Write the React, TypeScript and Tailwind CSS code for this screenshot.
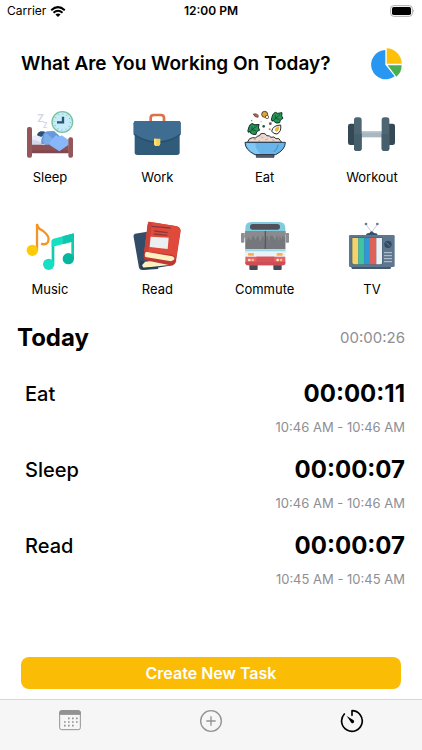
import type { ReactNode } from "react";

function SleepIcon() {
  return (
    <svg viewBox="21 18 168 168" className="h-14 w-14" aria-hidden="true">
      <text x="67" y="66" fontSize="31" fill="#cfd3e6" fontFamily="Inter, sans-serif" fontWeight="600">Z</text>
      <text x="83" y="84" fontSize="22" fill="#cfd3e6" fontFamily="Inter, sans-serif" fontWeight="600">Z</text>
      <path d="M51 110q10-7 24-3l12 4v24H51z" fill="#e9edf7" />
      <path d="M51 119q14 0 30 9v8H51z" fill="#d3d9ea" />
      <path d="M66 106q1-9 11-12 10-2 15 3l-3 13q-7-4-10 1z" fill="#2d506f" />
      <path d="M79 132q-2-12 3-23 4-13 15-15l20-1 44 39z" fill="#6799df" />
      <path d="M90 99q7 0 12 8l22 17 10 11H89q-8-15 1-36z" fill="#7badea" />
      <path d="M51 134h110v25H51z" fill="#8c5055" />
      <path d="M51 151h110v9H51z" fill="#804951" />
      <path d="M104 126l19-20q9 7 17 0l21 14v14l-28 20-28-18z" fill="#89b8fa" />
      <rect x="36" y="81" width="15" height="92" rx="6" fill="#945659" />
      <rect x="160" y="112" width="14" height="61" rx="6" fill="#945659" />
      <circle cx="142" cy="66" r="33" fill="#78c39b" />
      <circle cx="142" cy="66" r="29" fill="#c6ebfa" />
      <circle cx="142" cy="66" r="24" fill="none" stroke="#75a7bb" strokeWidth="4" strokeDasharray="2 10.57" />
      <path d="M144 50v17h-18" fill="none" stroke="#29566d" strokeWidth="7" />
    </svg>
  );
}

function WorkIcon() {
  return (
    <svg viewBox="22 18 168 168" className="h-14 w-14" aria-hidden="true">
      <path d="M87 65V54q0-9 9-9h22q9 0 9 9v11" fill="none" stroke="#dc7047" strokeWidth="8" />
      <path d="M39 95h135v62q0 8-8 8H47q-8 0-8-8z" fill="#315b7b" />
      <path d="M36 70q0-7 7-7h127q7 0 7 7v34q-32 25-70 25t-71-25z" fill="#28506e" />
      <path d="M36 70q0-7 7-7h127q7 0 7 7v30q-32 24-70 24t-71-24z" fill="#3f6d91" />
      <path d="M97 116h19v14q0 5-4 8h-11q-4-3-4-8z" fill="#f2d357" />
      <path d="M97 116h7v22h-3q-4-3-4-8z" fill="#ffe06e" />
    </svg>
  );
}

function Leaf() {
  return (
    <>
      <path d="M-16 9Q-14-11-4-15l7 3 13-2-1 10 4 7-8 5-2 8q-12 5-19-6z" fill="#239653" stroke="#17352d" strokeWidth="3" strokeLinejoin="round" />
      <path d="M-15 14L10-9M-4 3v-9M-4 3L8 6" fill="none" stroke="#17352d" strokeWidth="2" />
    </>
  );
}

function EatIcon() {
  return (
    <svg viewBox="26 18 168 168" className="h-14 w-14" aria-hidden="true">
      <g transform="translate(145 52)"><Leaf /></g>
      <g transform="translate(75 86) rotate(4)"><Leaf /></g>
      <path d="M75 42q12-3 15 5l-1 5q-11 0-14-10z" fill="#d66052" stroke="#363039" strokeWidth="2" />
      <circle cx="109" cy="43" r="9" fill="#dca439" stroke="#383334" strokeWidth="2.5" />
      <circle cx="116" cy="51" r="5" fill="#fff0bd" stroke="#383334" strokeWidth="2" />
      <path d="M130 94q3-18 27-19 3 20-11 27-10 0-16-8z" fill="#fffdf2" stroke="#222f39" strokeWidth="3" />
      <path d="M139 91q2-11 14-12 0 13-8 17z" fill="#efb432" />
      <circle cx="106" cy="79" r="4" fill="#295b4a" />
      <circle cx="126" cy="71" r="4" fill="#684b4d" />
      <circle cx="124" cy="88" r="3" fill="#d87766" />
      <circle cx="70" cy="62" r="2" fill="#48826e" />
      <circle cx="98" cy="65" r="2" fill="#d6b47a" />
      <path d="M57 127l7-11 9-3 9 1q3-7 12-7 0-7 10-7 8 0 11 7 9-1 13 5 10-4 15 4 11-3 13 6l4 5z" fill="#eed9ce" stroke="#322f35" strokeWidth="3" strokeLinejoin="round" />
      <path d="M76 117l7 2m15-8 7 3m5 6 9-3m12 3 8 2m-50 2 6-2" stroke="#ad9791" strokeWidth="2" />
      <path d="M50 127h121q0 22-29 37H80q-30-14-30-37z" fill="#69b5e9" stroke="#213748" strokeWidth="3" />
      <path d="M54 130h27q0 19 16 32H82q-27-13-28-32z" fill="#83c8f4" />
      <path d="M150 134q-3 14-14 22" fill="none" stroke="#4688b7" strokeWidth="3" />
      <path d="M84 164h53v8H84z" fill="#555f70" stroke="#252e39" strokeWidth="2" />
    </svg>
  );
}

function WorkoutIcon() {
  return (
    <svg viewBox="36 18 168 168" className="h-14 w-14" aria-hidden="true">
      <rect x="84" y="94" width="70" height="18" fill="#a8b8c1" />
      <path d="M84 94h70v4H84z" fill="#bac6cc" />
      <rect x="48" y="71" width="28" height="64" rx="7" fill="#354955" />
      <rect x="161" y="71" width="28" height="64" rx="7" fill="#354955" />
      <rect x="66" y="52" width="23" height="101" rx="8" fill="#4e6673" />
      <rect x="149" y="52" width="23" height="101" rx="8" fill="#4e6673" />
      <path d="M66 102h23v43q0 8-8 8h-7q-8 0-8-8zm83 0h23v43q0 8-8 8h-7q-8 0-8-8z" fill="#465f6c" />
    </svg>
  );
}

function MusicIcon() {
  return (
    <svg viewBox="21 18 168 168" className="h-14 w-14" aria-hidden="true">
      <path d="M66 115V36q2 14 17 20 24 18 16 34-5 9-18 6" fill="none" stroke="#f49426" strokeWidth="7" strokeLinecap="round" />
      <circle cx="52" cy="115" r="17" fill="#fecb08" />
      <path d="M114 155V88l59-18v68" fill="none" stroke="#17c9ae" strokeWidth="8" />
      <path d="M110 87q0-5 5-7l57-15q5-1 5 4v19l-67 17z" fill="#17dfc3" />
      <path d="M143 73l29-8q5-1 5 4v19l-34 9z" fill="#10c6ad" />
      <circle cx="101" cy="157" r="17" fill="#17dfc3" />
      <circle cx="160" cy="140" r="17" fill="#07b69f" />
    </svg>
  );
}

function ReadIcon() {
  return (
    <svg viewBox="22 18 168 168" className="h-14 w-14" aria-hidden="true">
      <path d="M40 65l37-6 33 112-49 3q-7 0-9-7L36 76q-2-8 4-11z" fill="#334c67" />
      <path d="M60 151l94-12-7 23-82 5q-8-8-5-16z" fill="#fff0c0" />
      <path d="M58 147q-6 7-1 20l8 7 87-14 13-13-8 2-7 9-83 9q-7-1-5-9l8-8z" fill="#263e55" />
      <path d="M80 29l82 13q15 3 15 15l-14 90q-3 15-18 13l-73-15q-8-3-6-14z" fill="#bd3835" />
      <path d="M73 119l79 14q9 4 5 10l-9 5-77-13q-4-8 2-16z" fill="#fff0c0" />
      <path d="M84 29l80 14q13 3 12 13l-13 84q-3-9-13-12l-82-10 10-81q1-9 6-8z" fill="#df4a3b" />
      <path d="M82 30l9 2-12 87-11-1 10-80z" fill="#cc4138" />
      <path d="M87 74l54 3-3 34-54-6z" fill="#eceff1" />
      <path d="M90 43l57 5M98 57l40 5M97 66l40 4" stroke="#8a3a3c" strokeWidth="4" />
    </svg>
  );
}

function CommuteIcon() {
  return (
    <svg viewBox="26 18 168 168" className="h-14 w-14" aria-hidden="true">
      <path d="M52 65H42v26m118-26h20v26" fill="none" stroke="#a5b0b7" strokeWidth="4" />
      <rect x="38" y="63" width="10" height="29" rx="3" fill="#8b8e93" />
      <rect x="172" y="63" width="10" height="29" rx="3" fill="#8b8e93" />
      <rect x="63" y="155" width="25" height="19" rx="3" fill="#494b52" />
      <rect x="135" y="155" width="25" height="19" rx="3" fill="#494b52" />
      <path d="M51 48q0-18 18-18h83q19 0 19 18v74H51z" fill="#80ccdf" />
      <rect x="65" y="36" width="90" height="17" rx="8" fill="#50515a" />
      <path d="M51 57h120v54H51z" fill="#75777c" />
      <path d="M51 57h120v12l-5 12v-9h-5v12l-8-14v19l-7-20-6 16-7-14h-9v19l-7-20-8 13-6-14-7 21-7-20-8 14-7-15-7 18-7-12-6 13-7-14z" fill="#8a8b8f" />
      <path d="M111 57v55" stroke="#545961" strokeWidth="4" />
      <path d="M51 112h120v24H51z" fill="#e8f2f7" />
      <path d="M51 112h120v6H51z" fill="#9ad7e6" />
      <path d="M51 134h120v17q0 9-9 9H60q-9 0-9-9z" fill="#ea6264" />
      <path d="M51 149h120v3q0 8-9 8H60q-9 0-9-8z" fill="#ce4d56" />
      <path d="M84 134h54v16H84z" fill="#d75259" />
      <rect x="59" y="123" width="18" height="8" rx="3" fill="#f8b14b" />
      <rect x="145" y="123" width="18" height="8" rx="3" fill="#f8b14b" />
      <g fill="#fff4c5"><circle cx="63" cy="144" r="4" /><circle cx="148" cy="144" r="4" /></g>
      <g fill="#ffc078"><circle cx="73" cy="144" r="4" /><circle cx="158" cy="144" r="4" /></g>
    </svg>
  );
}

function TvIcon() {
  return (
    <svg viewBox="36 18 168 168" className="h-14 w-14" aria-hidden="true">
      <path d="M102 37l17 24 17-24" fill="none" stroke="#b7adb9" strokeWidth="2" />
      <circle cx="102" cy="36" r="4" fill="#607b99" /><circle cx="136" cy="36" r="4" fill="#607b99" />
      <path d="M102 70q0-7 10-7 7-10 14 0 11 0 11 7z" fill="#36536c" />
      <path d="M56 162h123l-4 9H60z" fill="#405870" />
      <rect x="51" y="69" width="137" height="96" rx="4" fill="#5e778f" />
      <rect x="59" y="76" width="93" height="82" rx="4" fill="#49637a" />
      <path d="M61 78h18v79H65q-4-2-4-6z" fill="#f5d36a" />
      <path d="M79 78h18v79H79z" fill="#41c2a1" />
      <path d="M97 78h17v79H97z" fill="#2d98d5" />
      <path d="M114 78h19v79h-19z" fill="#df6258" />
      <path d="M133 78h17v74q0 5-5 5h-12z" fill="#ecf0f3" />
      <circle cx="168" cy="97" r="11" fill="#304b63" />
      <path d="M162 91l12 12" stroke="#6f879b" strokeWidth="3" />
      <path d="M156 122h24m-24 9h24m-24 9h24m-24 9h24" stroke="#bdc9d2" strokeWidth="3" />
    </svg>
  );
}

function StatusBar() {
  return (
    <div className="grid h-[22px] grid-cols-3 items-center px-[7px] text-xs">
      <div className="flex items-center gap-1">
        <span>Carrier</span>
        <svg viewBox="0 0 48 34" className="h-[11px] w-4" aria-label="Wi-Fi">
          <path d="M3 13q21-19 42 0M10 21q14-12 28 0" fill="none" stroke="#000" strokeWidth="6" />
          <path d="M16 26q8-6 16 0l-8 8z" />
        </svg>
      </div>
      <span className="text-center font-semibold">12:00 PM</span>
      <svg viewBox="0 0 75 36" className="h-3 w-[25px] justify-self-end" aria-label="Battery full">
        <rect x="2" y="2" width="65" height="32" rx="9" fill="none" stroke="#aaa" strokeWidth="3" />
        <rect x="6" y="6" width="57" height="24" rx="5" />
        <path d="M70 13q5 5 0 10z" fill="#aaa" />
      </svg>
    </div>
  );
}

const activities: { name: string; icon: ReactNode }[] = [
  { name: "Sleep", icon: <SleepIcon /> },
  { name: "Work", icon: <WorkIcon /> },
  { name: "Eat", icon: <EatIcon /> },
  { name: "Workout", icon: <WorkoutIcon /> },
  { name: "Music", icon: <MusicIcon /> },
  { name: "Read", icon: <ReadIcon /> },
  { name: "Commute", icon: <CommuteIcon /> },
  { name: "TV", icon: <TvIcon /> },
];

const entries = [
  { name: "Eat", duration: "00:00:11", range: "10:46 AM - 10:46 AM" },
  { name: "Sleep", duration: "00:00:07", range: "10:46 AM - 10:46 AM" },
  { name: "Read", duration: "00:00:07", range: "10:45 AM - 10:45 AM" },
];

export default function App() {
  return (
    <div className="flex min-h-screen flex-col bg-white font-['Inter',sans-serif] text-black">
      <StatusBar />
      <main className="flex flex-1 flex-col">
        <header className="flex h-[84px] items-center justify-between pr-5 pl-[21px]">
          <h1 className="text-[19px] font-semibold whitespace-nowrap">What Are You Working On Today?</h1>
          <button type="button" aria-label="Statistics">
            <svg viewBox="0 0 96 96" className="h-8 w-8">
              <path d="M46 6a44 44 0 1 0 28 79L46 50z" fill="#2797f1" />
              <path d="M50 1a46 46 0 0 1 45 46H50z" fill="#fec008" />
              <path d="M53 52h42q0 22-16 34z" fill="#4bae50" />
            </svg>
          </button>
        </header>

        <div className="grid grid-cols-[repeat(4,56px)] justify-between gap-y-[30px] px-[22px]">
          {activities.map((a) => (
            <button key={a.name} type="button" className="flex flex-col items-center gap-1">
              {a.icon}
              <span className="text-[13px] leading-[22px] whitespace-nowrap">{a.name}</span>
            </button>
          ))}
        </div>

        <section className="mt-[10px] px-[17px]">
          <div className="flex h-14 items-center justify-between">
            <h2 className="text-2xl font-bold">Today</h2>
            <span className="text-[15px] text-[#8e8e93]">00:00:26</span>
          </div>
          <ul>
            {entries.map((e, i) => (
              <li key={i} className="flex h-[76px] items-start justify-between pt-3 pl-2">
                <span className="text-xl leading-8 font-medium">{e.name}</span>
                <div className="flex flex-col items-end gap-1">
                  <span className="text-2xl leading-8 font-bold">{e.duration}</span>
                  <span className="text-[13px] leading-[26px] text-[#8e8e93]">{e.range}</span>
                </div>
              </li>
            ))}
          </ul>
        </section>

        <div className="mt-auto px-[21px] pb-[10px]">
          <button type="button" className="h-8 w-full rounded-lg bg-[#fbbc05] text-base font-semibold text-white">
            Create New Task
          </button>
        </div>
      </main>

      <nav className="grid h-[51px] grid-cols-3 justify-items-center border-t border-[#d6d6d6] bg-[#f6f6f6] pt-[9px]">
        <button type="button" aria-label="Calendar" className="h-6">
          <svg viewBox="0 0 72 72" className="h-6 w-6" fill="none" stroke="#929292" strokeWidth="3">
            <rect x="5" y="5" width="62" height="57" rx="6" />
            <path d="M5 16v-5q0-6 6-6h50q6 0 6 6v5z" fill="#929292" />
            <path d="M30 28h30M18 39h42M18 50h31" strokeWidth="5" strokeDasharray="5 7" />
          </svg>
        </button>
        <button type="button" aria-label="Add" className="h-6">
          <svg viewBox="0 0 72 72" className="h-6 w-6" fill="none" stroke="#929292" strokeWidth="4">
            <circle cx="36" cy="36" r="31" />
            <path d="M36 22v28M22 36h28" />
          </svg>
        </button>
        <button type="button" aria-label="Timer" className="h-6">
          <svg viewBox="0 0 72 72" className="h-6 w-6" fill="none" stroke="#000" strokeWidth="5">
            <path d="M13 15a31 31 0 1 0 23-10v14" strokeLinecap="round" strokeLinejoin="round" />
            <path d="M20 21l21 13q3 4 0 7-4 3-7 0z" fill="#000" stroke="none" />
          </svg>
        </button>
      </nav>
    </div>
  );
}
